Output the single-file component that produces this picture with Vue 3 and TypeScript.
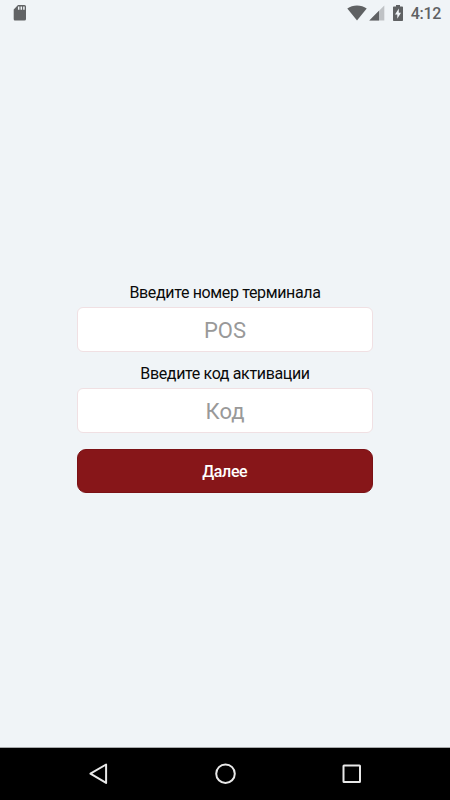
<script setup lang="ts">
import { ref } from 'vue'

interface Field {
  id: string
  label: string
  placeholder: string
}

const fields: Field[] = [
  { id: 'terminal', label: 'Введите номер терминала', placeholder: 'POS' },
  { id: 'code', label: 'Введите код активации', placeholder: 'Код' },
]
const values = ref<Record<string, string>>({ terminal: '', code: '' })
</script>

<template>
  <div class="screen">
    <header class="status">
      <svg class="sd" width="14" height="18" viewBox="0 0 14 18">
        <path d="M5 1h6.500A1.500 1.500 0 0 1 13 2.500v12.500a1.500 1.500 0 0 1-1.500 1.500h-9A1.500 1.500 0 0 1 .7 15V5.500z" fill="#616365" />
        <path d="M5.700 2.600v3.200M8.300 2.600v3.200M10.900 2.600v3.200" stroke="#f0f4f7" stroke-width="1.500" />
      </svg>
      <div class="indicators">
        <svg class="wifi" width="20" height="16" viewBox="0 0 20 16">
          <path d="M10 15.600L.3 3.500Q4.500.4 10 .4T19.700 3.500z" fill="#5f6163" />
        </svg>
        <svg class="signal" width="16" height="16" viewBox="0 0 16 16">
          <path d="M15.300.5v15H.3z" fill="#bfc2c5" />
          <path d="M10 5.800v9.700H.3z" fill="#5f6163" />
        </svg>
        <svg class="battery" width="10" height="16" viewBox="0 0 10 16">
          <path d="M3 0h4v1.500h2.200q.8 0 .8.800v12.900q0 .8-.8.800H.8q-.8 0-.8-.8V2.300q0-.8.8-.8H3z" fill="#5f6163" />
          <path d="M5.800 3.500L2 9.500h2.300v4.300L8 7.800H5.800z" fill="#f0f4f7" />
        </svg>
        <span class="clock">4:12</span>
      </div>
    </header>

    <main class="content">
      <form class="form" @submit.prevent>
        <div v-for="field in fields" :key="field.id" class="field">
          <label class="label" :for="field.id">{{ field.label }}</label>
          <input :id="field.id" v-model="values[field.id]" class="input" type="text" :placeholder="field.placeholder" />
        </div>
        <button class="submit" type="submit">Далее</button>
      </form>
    </main>

    <nav class="navbar">
      <svg width="24" height="24" viewBox="0 0 24 24">
        <path d="M19.100 2.500v18.400L3.400 11.700z" />
      </svg>
      <svg width="24" height="24" viewBox="0 0 24 24">
        <circle cx="11.500" cy="11.700" r="9.300" />
      </svg>
      <svg width="24" height="24" viewBox="0 0 24 24">
        <rect x="3.500" y="3.500" width="16.500" height="16.500" rx=".5" />
      </svg>
    </nav>
  </div>
</template>

<style>
body {
  margin: 0;
}
</style>

<style scoped>
.screen {
  display: flex;
  flex-direction: column;
  height: 800px;
  overflow: hidden;
  background: #f0f4f7;
  font-family: Roboto, "Noto Sans", sans-serif;
}
.status {
  display: flex;
  justify-content: space-between;
  height: 27px;
  padding: 0 9px 0 13px;
}
.sd {
  margin-top: 4px;
}
.indicators {
  display: flex;
  align-items: flex-start;
  padding-top: 5px;
}
.signal {
  margin-left: 2px;
}
.battery {
  margin-left: 8px;
}
.clock {
  margin: 0 0 0 8px;
  color: #5f6163;
  font-size: 16px;
  font-weight: 500;
  letter-spacing: -0.300px;
  line-height: 18px;
}
.content {
  flex: 1;
  padding: 255px 77px 0;
}
.form {
  display: flex;
  flex-direction: column;
}
.field {
  display: flex;
  flex-direction: column;
  height: 81px;
  width: 296px;
}
.label {
  height: 24px;
  padding-top: 1px;
  color: #0a0a0a;
  font-size: 16px;
  letter-spacing: -0.350px;
  line-height: 20px;
  text-align: center;
}
.input {
  box-sizing: border-box;
  width: 100%;
  height: 45px;
  padding: 2px 0 0;
  border: 1px solid #f0e0e3;
  border-radius: 6px;
  outline: none;
  background: #fff;
  color: #111;
  font: 400 22px Roboto, "Noto Sans", sans-serif;
  text-align: center;
}
.input::placeholder {
  color: #999;
  opacity: 1;
}
.submit {
  width: 295.500px;
  height: 43.500px;
  margin-top: 5px;
  padding: 1px 0 0;
  border: 1px solid #7b1115;
  border-radius: 9px;
  background: #871619;
  color: #fff;
  font: 500 16px Roboto, "Noto Sans", sans-serif;
  letter-spacing: -0.350px;
}
.navbar {
  display: flex;
  justify-content: space-between;
  box-sizing: border-box;
  height: 53px;
  padding: 14px 86px 0;
  border-top: 1px solid #a7a9ab;
  background: #000;
}
.navbar svg {
  fill: none;
  stroke: #e8e8e8;
  stroke-width: 2;
  stroke-linejoin: round;
}
.navbar svg:first-child {
  margin-left: 1px;
}
</style>
